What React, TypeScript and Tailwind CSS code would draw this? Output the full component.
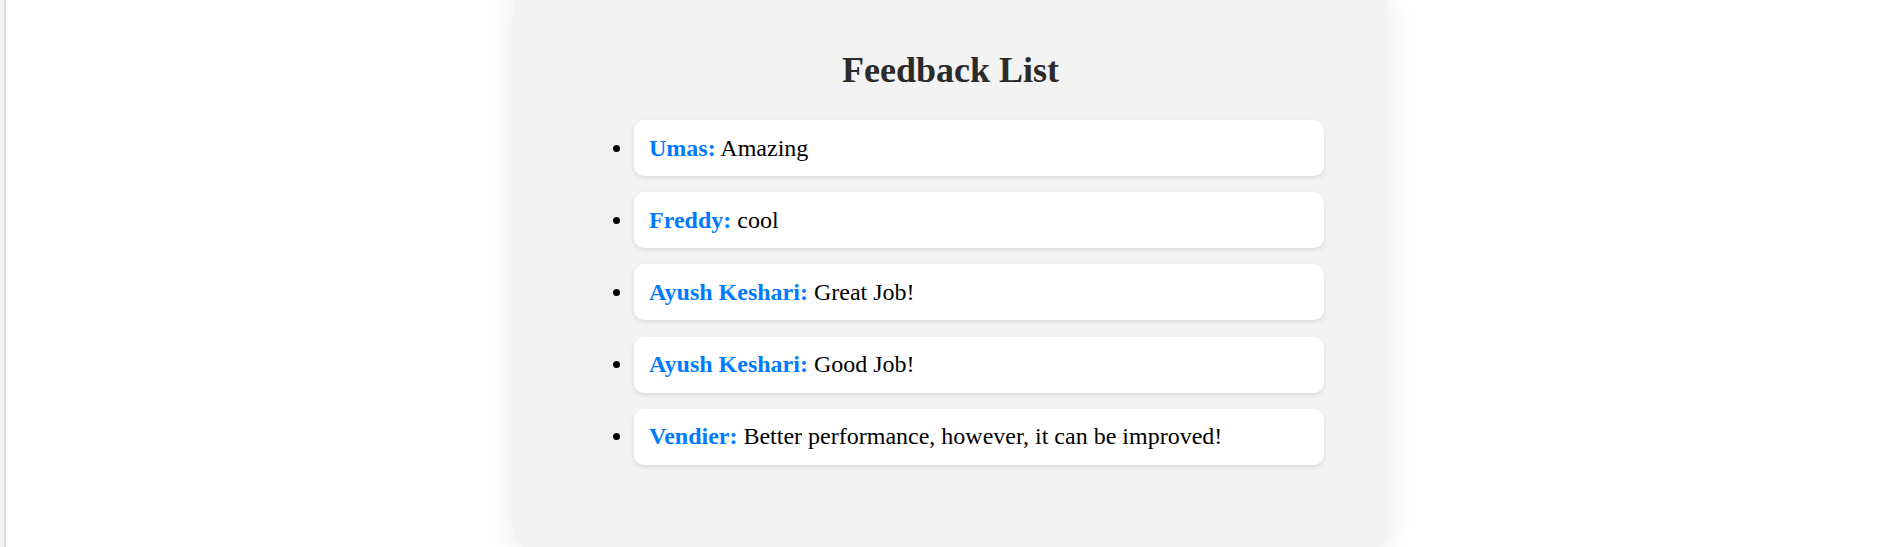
const feedback = [
  { name: 'Umas', text: 'Amazing' },
  { name: 'Freddy', text: 'cool' },
  { name: 'Ayush Keshari', text: 'Great Job!' },
  { name: 'Ayush Keshari', text: 'Good Job!' },
  { name: 'Vendier', text: 'Better performance, however, it can be improved!' },
];

export default function App() {
  return (
    <div className="flex h-[547px] w-full overflow-hidden bg-white font-['Liberation_Serif',serif]">
      {/* left edge strip */}
      <div className="w-[4px] shrink-0 bg-[#f5f5f5]" />
      <div className="w-[2px] shrink-0 bg-[#dcdcdc]" />

      <div className="flex flex-1 justify-center pl-[4px]">
        <div className="h-[549px] w-[873px] shrink-0 rounded-b-[16px] bg-[#f3f3f3] pt-[49px] shadow-[0_0_30px_rgba(0,0,0,0.1)]">
          <h2 className="mb-[29px] text-center text-[36px] font-bold leading-[normal] text-[#2b2b2b]">
            Feedback List
          </h2>
          <ul className="ml-[120px] mr-[63px] flex list-disc flex-col gap-[16.2px] text-[24px] leading-[normal] text-black">
            {feedback.map((f, i) => (
              <li
                key={i}
                className="rounded-[10px] bg-white px-[15px] py-[14.5px] shadow-[0_2px_5px_rgba(0,0,0,0.1)]"
              >
                <span className="font-bold text-[#007bff]">{f.name}:</span> {f.text}
              </li>
            ))}
          </ul>
        </div>
      </div>
    </div>
  );
}
